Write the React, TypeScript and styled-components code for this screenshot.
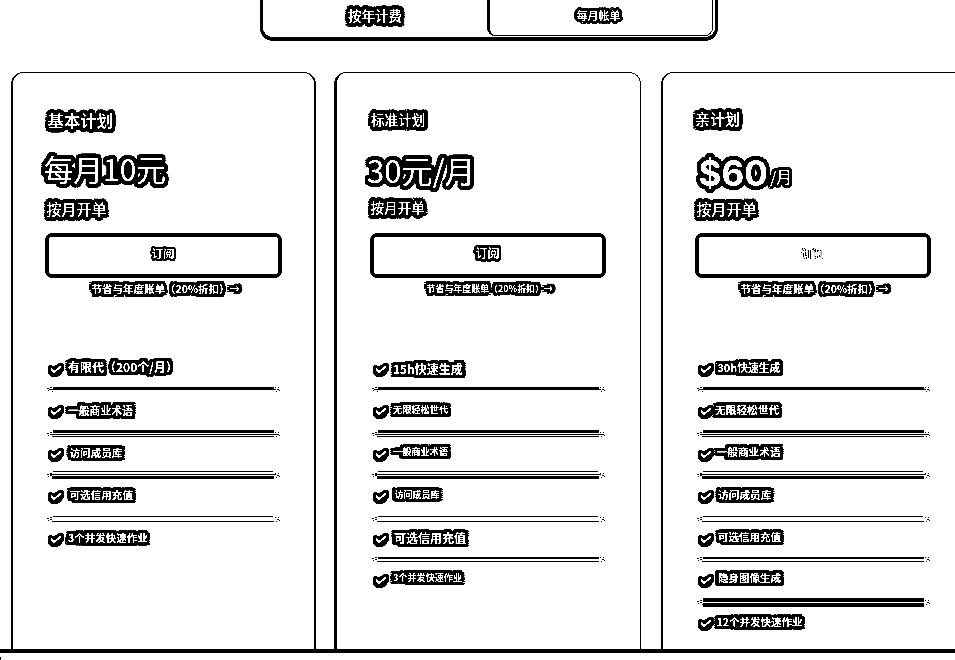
import React from "react";
import styled, { createGlobalStyle } from "styled-components";

const outline = (r: number) => {
  const rings: string[] = [];
  [r, r / 2].forEach((radius) => {
    for (let i = 0; i < 16; i++) {
      const a = (i * Math.PI) / 8;
      const x = Math.max(-0.85, Math.min(0.85, Math.cos(a))) * radius * 1.18;
      const y = Math.max(-0.85, Math.min(0.85, Math.sin(a))) * radius * 1.18;
      rings.push(`${x.toFixed(2)}px ${y.toFixed(2)}px 0 #000`);
    }
  });
  return rings.join(",");
};

const GlobalStyle = createGlobalStyle`
  * { box-sizing: border-box; }
  html, body { margin: 0; background: #fff; overflow: hidden; }
  body { font-family: "Noto Sans CJK SC", sans-serif; }
`;

const Page = styled.main`
  width: 955px;
  height: 660px;
  overflow: hidden;
  background: #fff;
  display: flex;
  flex-direction: column;
  filter: brightness(1.1) contrast(8);
`;

const Toggle = styled.div`
  flex: none;
  display: grid;
  grid-template-columns: 224px 226px;
  width: 458px;
  height: 53px;
  margin: -12px 0 0 260px;
  border: 3px solid #000;
  border-bottom-width: 4px;
  border-radius: 13px;
`;

const Option = styled.button<{ $active?: boolean }>`
  display: flex;
  align-items: center;
  justify-content: center;
  padding: 2px 0 0;
  background: none;
  font: inherit;
  border: 0 solid #000;
  ${(p) => p.$active && "border-width: 0 1px 1px 3px; border-radius: 8px; height: 45px; padding: 4px 5px 0 0;"}
`;

const Label = styled.span<{ $size: number; $ring?: number; $weight?: number; $latin?: boolean }>`
  display: block;
  color: #fff;
  white-space: nowrap;
  font-size: ${(p) => p.$size}px;
  font-weight: ${(p) => p.$weight ?? 500};
  font-family: ${(p) => (p.$latin ? 'Inter, ' : "")}"Noto Sans CJK SC", sans-serif;
  text-shadow: ${(p) => outline(p.$ring ?? 3.5)};
`;

const Cards = styled.section`
  flex: none;
  display: grid;
  grid-template-columns: 305px 306px 305px;
  column-gap: 19px;
  height: 577px;
  margin: 31px 0 0 11px;
`;

const Card = styled.article<{ $left: number; $right: number; $shift: number }>`
  display: flex;
  flex-direction: column;
  margin-left: ${(p) => p.$shift}px;
  border: solid #000;
  border-width: 1px ${(p) => p.$right}px 0 ${(p) => p.$left}px;
  border-radius: 12px 12px 0 0;
`;

const Content = styled.div<{ $inset: number }>`
  width: 237px;
  margin-left: ${(p) => p.$inset}px;
  display: flex;
  flex-direction: column;
`;

const Line = styled.div<{ $h: number; $top?: number; $left?: number }>`
  display: flex;
  align-items: center;
  height: ${(p) => p.$h}px;
  margin-top: ${(p) => p.$top ?? 0}px;
  padding-left: ${(p) => p.$left ?? 0}px;
  line-height: 1;
`;

const PriceLine = styled(Line)`
  margin-left: -4px;
`;

const Subscribe = styled.button<{ $wide: boolean }>`
  display: flex;
  align-items: center;
  justify-content: center;
  width: ${(p) => (p.$wide ? 237 : 236)}px;
  height: 45px;
  margin-top: 15px;
  padding: 0 1px 6px 0;
  background: #fff;
  border: 4px solid #000;
  border-radius: 7px;
  font: inherit;
`;

const Features = styled.ul`
  list-style: none;
  margin: 58px 0 0;
  padding: 0;
`;

const Feature = styled.li<{ $h: number }>`
  height: ${(p) => p.$h}px;
`;

const FeatureRow = styled.div<{ $gap: number; $lift: number }>`
  display: flex;
  align-items: center;
  height: 22px;
  padding-left: 3px;
  gap: ${(p) => p.$gap}px;
  line-height: 1;
  & > span { margin-top: ${(p) => -p.$lift}px; }
`;

const Icon = styled.svg`
  display: block;
  flex: none;
  overflow: visible;
`;

const Rule = styled.svg`
  display: block;
  margin-left: 1px;
`;

const Floor = styled.footer`
  flex: none;
  height: 11px;
  border-top: 4px solid #000;
  &::after {
    content: "";
    display: block;
    width: 1px;
    height: 3px;
    margin-top: 4px;
    background: #000;
  }
`;

const Check = () => (
  <Icon width="16" height="16" viewBox="0 0 16 16" fill="none">
    <path d="M.3 4.6 3.5 4 6 5.4 10 2.4 14 2 16 3.4V9.7L11.5 15 8.5 16H4L.3 13.2Z" fill="#000" />
    <path d="M3 7.8 6.3 11 12.8 5.4" stroke="#fff" strokeWidth="1.8" />
  </Icon>
);

/* Each divider is a stack of stripes: [offset, thickness, start, end]. */
const stripes: number[][][] = [
  [[7, 3, 7, 228], [9, 1, 3, 230]],
  [[8, 3, 7, 228], [12, 1, 4, 231], [14, 1, 6, 228]],
  [[6, 1, 7, 227], [9, 1, 4, 230], [11, 3, 6, 228]],
  [[9, 1, 7, 227], [14, 1, 6, 228]],
  [[7, 2, 7, 228], [11, 1, 6, 228]],
  [[7, 4, 7, 228], [12, 4, 7, 228]],
];
const tails = [9, 12, 10, 12, 9, 11];

const Divider = ({ kind }: { kind: number }) => (
  <Rule width="236" height="16" shapeRendering="crispEdges">
    {stripes[kind].map(([y, h, a, b]) => (
      <rect key={y} x={a} y={y} width={b - a} height={h} />
    ))}
    <path
      transform={`translate(0 ${tails[kind] - 2})`}
      d="M1 1h2v1H1zM4 0h2v1H4zM2 3h1v1H2zM4 2h2v1H4zM6 4h1v1H6zM229 0h1v1h-1zM231 2h2v1h-2zM232 0h1v1h-1zM233 3h1v1h-1zM230 4h1v1h-1z"
    />
  </Rule>
);

type Item = { text: string; size: number; gap?: number; lift?: number };
type Plan = {
  left: number; right: number; shift: number; inset: number;
  name: string; nameSize: number; nameLeft: number; nameLift: number;
  price: string; priceSize: number; priceLeft: number; unit?: string;
  billing: number; billingLeft: number;
  subSize: number; subRing: number;
  noteSize: number; noteLeft: number;
  items: Item[];
};

const heights = [42, 43, 42, 43, 41, 43, 22];

const plans: Plan[] = [
  {
    left: 2, right: 2, shift: 0, inset: 32,
    name: "基本计划", nameSize: 16.4, nameLeft: 2.5, nameLift: 1,
    price: "每月10元", priceSize: 29.8, priceLeft: 2.5,
    billing: 15, billingLeft: 1.5,
    subSize: 11.5, subRing: 1.9, noteSize: 10.5, noteLeft: 46.5,
    items: [
      { text: "有限代（200个/月）", size: 12, lift: 4 },
      { text: "一般商业术语", size: 10.8, lift: 2 },
      { text: "访问成员库", size: 10.6, gap: 5.5, lift: 2 },
      { text: "可选信用充值", size: 10.6, gap: 5.5, lift: 2 },
      { text: "3个并发快速作业", size: 10.5, lift: 2 },
    ],
  },
  {
    left: 3, right: 1, shift: -1, inset: 33,
    name: "标准计划", nameSize: 13.6, nameLeft: 1, nameLift: 2,
    price: "30元/月", priceSize: 31, priceLeft: 1,
    billing: 13.6, billingLeft: 0.5,
    subSize: 12, subRing: 2.6, noteSize: 8.95, noteLeft: 56.5,
    items: [
      { text: "15h快速生成", size: 12, lift: 1 },
      { text: "无限轻松世代", size: 9.2, lift: 3 },
      { text: "一般商业术语", size: 9.2, lift: 5 },
      { text: "访问成员库", size: 9, gap: 5.5, lift: 3 },
      { text: "可选信用充值", size: 12, gap: 5, lift: 3 },
      { text: "3个并发快速作业", size: 9.1, lift: 5 },
    ],
  },
  {
    left: 2, right: 1, shift: 1, inset: 32,
    name: "亲计划", nameSize: 15, nameLeft: -1, nameLift: 6,
    price: "$60", priceSize: 35, priceLeft: 7.5, unit: "/月",
    billing: 15, billingLeft: 1.5,
    subSize: 11, subRing: 0.4, noteSize: 10.5, noteLeft: 45.5,
    items: [
      { text: "30h快速生成", size: 10.8, gap: 3.5, lift: 4 },
      { text: "无限轻松世代", size: 10.7, gap: 1, lift: 2 },
      { text: "一般商业术语", size: 10.7, gap: 2.5, lift: 4 },
      { text: "访问成员库", size: 10.7, lift: 2 },
      { text: "可选信用充值", size: 10.5, lift: 4 },
      { text: "隐身图像生成", size: 10.5, lift: 3 },
      { text: "12个并发快速作业", size: 10.5, gap: 2.5, lift: 2 },
    ],
  },
];

const PlanCard = ({ plan: p }: { plan: Plan }) => (
  <Card $left={p.left} $right={p.right} $shift={p.shift}>
    <Content $inset={p.inset}>
      <Line $h={22 - p.nameLift} $top={37} $left={Math.max(0, p.nameLeft)}>
        <Label $size={p.nameSize}>{p.name}</Label>
      </Line>
      <PriceLine $h={36} $top={(p.unit ? 23 : 19) + p.nameLift} $left={p.priceLeft}>
        <Label $size={p.priceSize} $weight={p.unit ? 700 : 400} $latin={!!p.unit} $ring={3.8}>{p.price}</Label>
        {p.unit && (
          <Line $h={36} $top={8} $left={2.5}>
            <Label $size={15.5} $weight={400} $ring={2.9}>{p.unit}</Label>
          </Line>
        )}
      </PriceLine>
      <Line $h={20} $top={p.unit ? 7 : 11} $left={p.billingLeft}>
        <Label $size={p.billing}>按月开单</Label>
      </Line>
      <Subscribe $wide={p.left === 2 && p.right === 2}>
        <Label $size={p.subSize} $ring={p.subRing}>订阅</Label>
      </Subscribe>
      <Line $h={22} $left={p.noteLeft}>
        <Label $size={p.noteSize} $ring={3.2} $weight={600}>节省与年度账单（20%折扣）→</Label>
      </Line>
      <Features>
        {p.items.map((it, i) => (
          <Feature key={it.text} $h={heights[i]}>
            <FeatureRow $gap={it.gap ?? 4} $lift={it.lift ?? 0}>
              <Check />
              <Label $size={it.size} $ring={3.4} $weight={600}>{it.text}</Label>
            </FeatureRow>
            {i < p.items.length - 1 && <Divider kind={i} />}
          </Feature>
        ))}
      </Features>
    </Content>
  </Card>
);

export default function App() {
  return (
    <Page>
      <GlobalStyle />
      <Toggle>
        <Option><Label $size={13.5}>按年计费</Label></Option>
        <Option $active><Label $size={11} $ring={2.9}>每月帐单</Label></Option>
      </Toggle>
      <Cards>
        {plans.map((p) => (
          <PlanCard key={p.name} plan={p} />
        ))}
      </Cards>
      <Floor />
    </Page>
  );
}
